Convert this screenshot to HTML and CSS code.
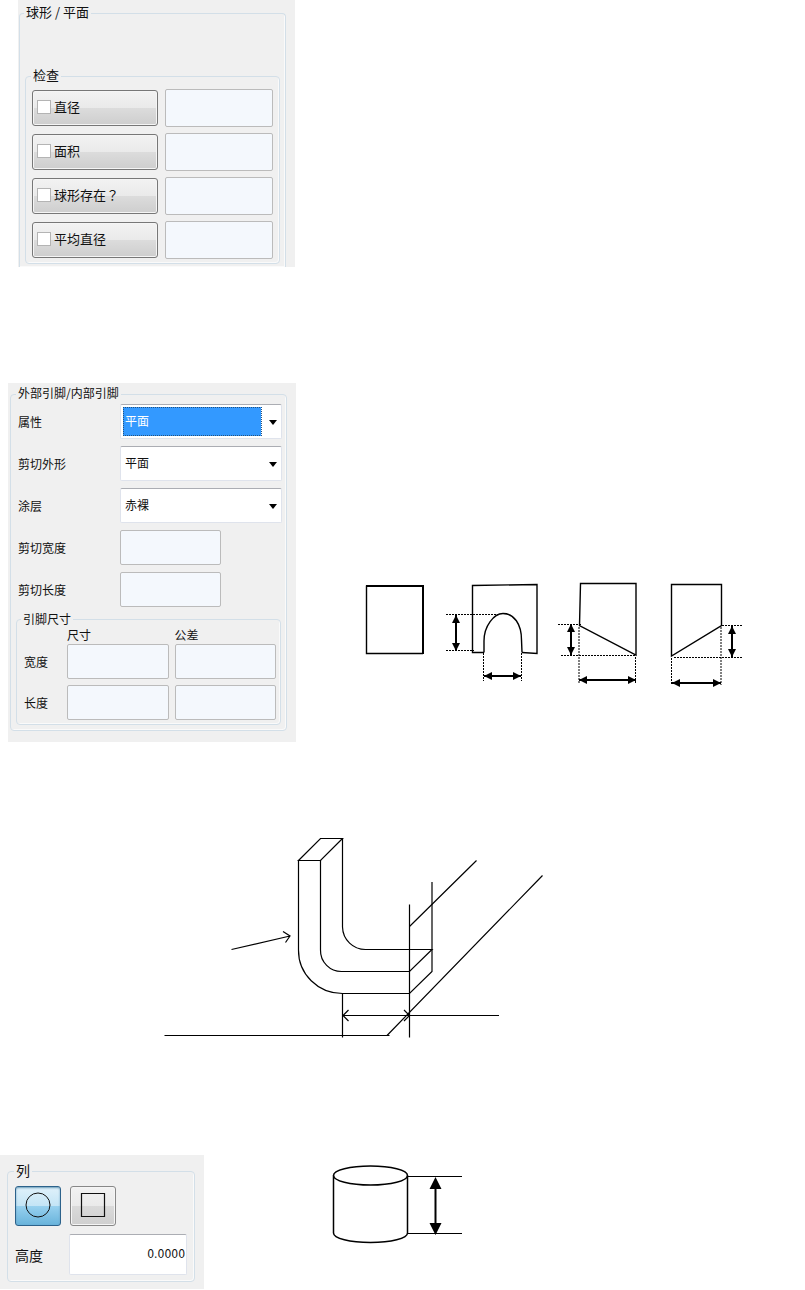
FILE: index.html
```html
<!DOCTYPE html>
<html lang="zh-CN">
<head>
<meta charset="utf-8">
<meta name="viewport" content="width=device-width, initial-scale=1">
<title>引脚设置</title>
<link rel="stylesheet" href="styles.css">
</head>
<body>
<main>
  <section class="ball">
    <div class="panel panel-ball">
      <fieldset class="group group-open">
        <legend>球形 / 平面</legend>
        <fieldset class="group group-check">
          <legend>检查</legend>
          <div class="check-row">
            <label class="toggle"><input type="checkbox">直径</label>
            <input class="field" type="text" aria-label="直径">
          </div>
          <div class="check-row">
            <label class="toggle"><input type="checkbox">面积</label>
            <input class="field" type="text" aria-label="面积">
          </div>
          <div class="check-row">
            <label class="toggle"><input type="checkbox"><span>球形存在<span class="mark" lang="zh-TW">？</span></span></label>
            <input class="field" type="text" aria-label="球形存在">
          </div>
          <div class="check-row">
            <label class="toggle"><input type="checkbox">平均直径</label>
            <input class="field" type="text" aria-label="平均直径">
          </div>
        </fieldset>
      </fieldset>
    </div>
  </section>

  <section class="lead">
    <div class="panel panel-lead">
      <fieldset class="group">
        <legend>外部引脚/内部引脚</legend>
        <div class="lead-rows">
          <label for="attr">属性</label>
          <div class="combo combo-active"><select id="attr"><option>平面</option></select></div>
          <label for="shape">剪切外形</label>
          <div class="combo"><select id="shape"><option>平面</option></select></div>
          <label for="coat">涂层</label>
          <div class="combo"><select id="coat"><option>赤裸</option></select></div>
          <label for="cut-w">剪切宽度</label>
          <input class="field field-short" id="cut-w" type="text">
          <label for="cut-l">剪切长度</label>
          <input class="field field-short" id="cut-l" type="text">
        </div>
        <fieldset class="group group-size">
          <legend>引脚尺寸</legend>
          <div class="size-grid size-head">
            <span></span><span>尺寸</span><span>公差</span>
          </div>
          <div class="size-grid">
            <label for="w-size">宽度</label>
            <input class="field" id="w-size" type="text">
            <input class="field" type="text" aria-label="宽度公差">
            <label for="l-size">长度</label>
            <input class="field" id="l-size" type="text">
            <input class="field" type="text" aria-label="长度公差">
          </div>
        </fieldset>
      </fieldset>
    </div>
    <svg class="drawing drawing-shapes" viewBox="350 575 400 120" width="400" height="120" aria-hidden="true">
      <defs>
        <marker id="solid" viewBox="0 0 8 8" refX="8" refY="4" markerWidth="8" markerHeight="8" markerUnits="userSpaceOnUse" orient="auto-start-reverse"><path d="M0 0L8 4L0 8Z"/></marker>
      </defs>
      <g fill="none" stroke="#000" stroke-width="1.4">
        <path d="M366.500 585.500V653.500H423"/>
        <path d="M366 586H423V654" stroke-width="2"/>
        <path d="M484 652.500H472.500V585.500L537 584.500V653.500L522 652.500"/>
        <path d="M484 652.500V641C484 626 494 613.500 503 613.500C514 613.500 521.500 624 521.500 640L522 652.500"/>
        <path d="M580.500 583.500H636V655L579.500 625.500Z"/>
        <path d="M671.500 584.500H721.500V625.500L671.500 656Z"/>
      </g>
      <g fill="none" stroke="#000" stroke-dasharray="2 1">
        <path d="M446 614.500H500M446 650.500H474M483.500 653V681M521.500 653V681"/>
        <path d="M558 624.500H581M561 655.500H635M579 627V684M635.500 657V684"/>
        <path d="M722 625.500H743M674 657.500H743M671.500 658V685M721 627V685"/>
      </g>
      <g stroke="#000" stroke-width="2">
        <path d="M456 615V651" marker-start="url(#solid)" marker-end="url(#solid)"/>
        <path d="M484 676H521" marker-start="url(#solid)" marker-end="url(#solid)"/>
        <path d="M571 624V655" marker-start="url(#solid)" marker-end="url(#solid)"/>
        <path d="M579 680H636" marker-start="url(#solid)" marker-end="url(#solid)"/>
        <path d="M735 626V657" marker-start="url(#solid)" marker-end="url(#solid)" transform="translate(-3 0)"/>
        <path d="M672 683H721" marker-start="url(#solid)" marker-end="url(#solid)"/>
      </g>
    </svg>
  </section>

  <section class="bend">
    <svg class="drawing" viewBox="150 830 400 215" width="400" height="215" aria-hidden="true">
      <g fill="none" stroke="#000" stroke-width="1.2">
        <path d="M298.500 860.500H320.500L342.500 838.500H320.500Z"/>
        <path d="M298.500 860V950A44 43 0 0 0 342.500 993.500H409.500L432 971.500V882"/>
        <path d="M320.500 860V950A21 21 0 0 0 342 971.500H409.500L432 949.500H366A23 23 0 0 1 342.500 927V838.500"/>
        <path d="M342.500 993V1037.500M409.500 904.500V1037.500"/>
        <path d="M409.500 926.500L476.500 860.500M387 1035.500L542.500 875.500M164.500 1035.500H389.500"/>
        <path d="M343 1015.500H499M348.500 1010L343 1015.500L348.500 1021M404 1010L409.500 1015.500L404 1021"/>
        <path d="M231.500 949.500L290 936M283 931.500L290 936L285.500 942.500"/>
      </g>
    </svg>
  </section>

  <section class="column">
    <div class="panel panel-column">
      <fieldset class="group">
        <legend>列</legend>
        <div class="shape-buttons">
          <button class="shape shape-on" type="button" aria-label="圆形" aria-pressed="true">
            <svg viewBox="0 0 26 26" width="26" height="26"><circle cx="13" cy="13" r="12" fill="none" stroke="#111"/></svg>
          </button>
          <button class="shape" type="button" aria-label="方形" aria-pressed="false">
            <svg viewBox="0 0 26 26" width="26" height="26"><path d="M1.500 1.500H24.500V24.500H1.500Z" fill="none" stroke="#111" stroke-width="1.200"/></svg>
          </button>
        </div>
        <div class="height-row">
          <label for="height">高度</label>
          <input class="field field-number" id="height" type="text" value="0.0000">
        </div>
      </fieldset>
    </div>
    <svg class="drawing drawing-cylinder" viewBox="325 1160 145 90" width="145" height="90" aria-hidden="true">
      <g fill="none" stroke="#000" stroke-width="1.5">
        <ellipse cx="370.500" cy="1175.500" rx="37" ry="9.500"/>
        <path d="M333.500 1175.500V1233C333.500 1238.500 350 1242.500 370.500 1242.500S407.500 1238.500 407.500 1233V1175.500"/>
        <path d="M407 1176.500H462M407 1233.500H462" stroke-width="1.2"/>
        <path d="M435.500 1186V1225" stroke-width="2"/>
      </g>
      <path d="M435.500 1177L441.500 1189H429.500ZM435.500 1235L429.500 1223H441.500Z"/>
    </svg>
  </section>
</main>
</body>
</html>
```
FILE: styles.css
```css
* {
  box-sizing: border-box;
}

body {
  margin: 0;
  background: #fff;
  color: #111;
  font: 12px/20px "Noto Sans CJK SC", sans-serif;
}

input,
select,
button {
  margin: 0;
  font: inherit;
  color: inherit;
}

section {
  display: flex;
  align-items: flex-start;
}

.drawing {
  display: block;
  flex: none;
}

.panel {
  flex: none;
  max-width: 100%;
  background: #f0f0f0;
}

.group {
  min-width: 0;
  margin: 0;
  padding: 0;
  border: 1px solid #d3dfe8;
  border-radius: 4px;
  box-shadow: inset -1px -1px #fafafa;
}

.group legend {
  margin-left: 5px;
  padding: 0 2px 2px;
  line-height: 18px;
}

.field {
  display: block;
  width: 100%;
  min-width: 0;
  height: 35px;
  padding: 0 4px;
  border: 1px solid #bbb;
  border-radius: 2px;
  background: #f4f8fd;
}

/* Ball / plane panel */

.panel-ball {
  width: 277px;
  margin-left: 18px;
  padding: 3px 9px 0 1px;
  font-size: 13px;
}

.panel-ball legend {
  margin-left: -1px;
}

.group-open {
  padding: 43px 5px 3px;
  border-bottom: 0;
  border-radius: 4px 4px 0 0;
}

.group-check {
  display: grid;
  gap: 6px;
  padding: 3px 6px 4px;
}

.check-row {
  display: grid;
  grid-template-columns: 126fr 108fr;
  align-items: center;
  gap: 7px;
}

.check-row .field {
  height: 38px;
}

.toggle {
  display: flex;
  align-items: center;
  gap: 3px;
  height: 36px;
  padding: 0 4px 2px;
  border: 1px solid #777;
  border-radius: 3px;
  background: linear-gradient(#f2f2f2, #eaeaea 49%, #dcdcdc 50%, #cecece);
  box-shadow: inset 0 0 0 1px #f5f5f5;
}

.toggle input {
  width: 14px;
  height: 14px;
  border: 1px solid #b4b4b4;
  background: #fff;
  appearance: none;
}

.mark {
  font-family: "Noto Sans CJK TC", sans-serif;
}

/* Lead panel */

.lead {
  margin-top: 116px;
}

.panel-lead {
  width: 288px;
  margin-left: 8px;
  padding: 1px 9px 11px 2px;
}

.panel-lead > .group {
  padding-bottom: 5px;
}

.lead-rows {
  display: grid;
  grid-template-columns: 102px 1fr;
  align-items: center;
  gap: 7px 0;
  padding: 0 4px 3px 7px;
}

.combo {
  position: relative;
}

.combo::after {
  content: "";
  position: absolute;
  top: 16px;
  right: 5px;
  border: 4px solid transparent;
  border-top: 5px solid #000;
  border-bottom: 0;
  pointer-events: none;
}

.combo select {
  display: block;
  width: 100%;
  height: 35px;
  padding: 0 24px 2px 4px;
  border: 1px solid #dfe3ec;
  border-top-color: #abadb3;
  border-radius: 2px;
  background: #fff;
  appearance: none;
}

.combo-active select {
  color: #fff;
  background: linear-gradient(#39f, #39f) 2px 2px / calc(100% - 22px) 29px no-repeat #fff;
}

.combo-active::before {
  content: "";
  position: absolute;
  inset: 3px 20px 3px 3px;
  border: 1px dotted #23527f;
  pointer-events: none;
}

.field-short {
  width: 101px;
}

.group-size {
  margin: 0 5px;
  padding: 0 4px 4px 7px;
}

.group .group-size legend {
  margin-left: -3px;
  padding-bottom: 0;
}

.size-grid {
  display: grid;
  grid-template-columns: 37px 1fr 1fr;
  align-items: center;
  gap: 6px;
}

.size-head {
  padding-bottom: 2px;
  line-height: 14px;
}

/* Lead shape drawings */

.drawing-shapes {
  margin: 192px 0 0 54px;
}

.bend {
  margin-top: 88px;
  padding-left: 150px;
}

/* Column panel */

.column {
  margin-top: 110px;
}

.panel-column {
  width: 204px;
  padding: 6px 9px 7px 7px;
  font-size: 14px;
}

.panel-column .group {
  padding: 5px 7px 6px;
}

.panel-column legend {
  margin-left: -1px;
}

.shape-buttons {
  display: flex;
  gap: 9px;
}

.shape {
  display: grid;
  place-items: center;
  width: 46px;
  height: 40px;
  padding: 0 0 2px;
  border: 1px solid #888;
  border-radius: 3px;
  background: linear-gradient(#f2f2f2, #eaeaea 49%, #dadada 50%, #cfcfcf);
  box-shadow: inset 0 0 0 1px #f5f5f5;
}

.shape-on {
  border-color: #2c628b;
  background: linear-gradient(#e0f1fa, #c4e5f6 49%, #98d1ef 50%, #68b3db);
  box-shadow: inset 0 1px 2px #6a9cb9;
}

.height-row {
  display: grid;
  grid-template-columns: 54px 1fr;
  align-items: center;
  margin-top: 8px;
}

.field-number {
  height: 41px;
  padding: 0 1px 2px;
  border-color: #abadb3 #dfe3ec #dfe3ec;
  background: #fff;
  font-family: "DejaVu Sans Condensed", "Liberation Sans", sans-serif;
  font-size: 12px;
  text-align: right;
}

.drawing-cylinder {
  margin: 5px 0 0 121px;
}
```
